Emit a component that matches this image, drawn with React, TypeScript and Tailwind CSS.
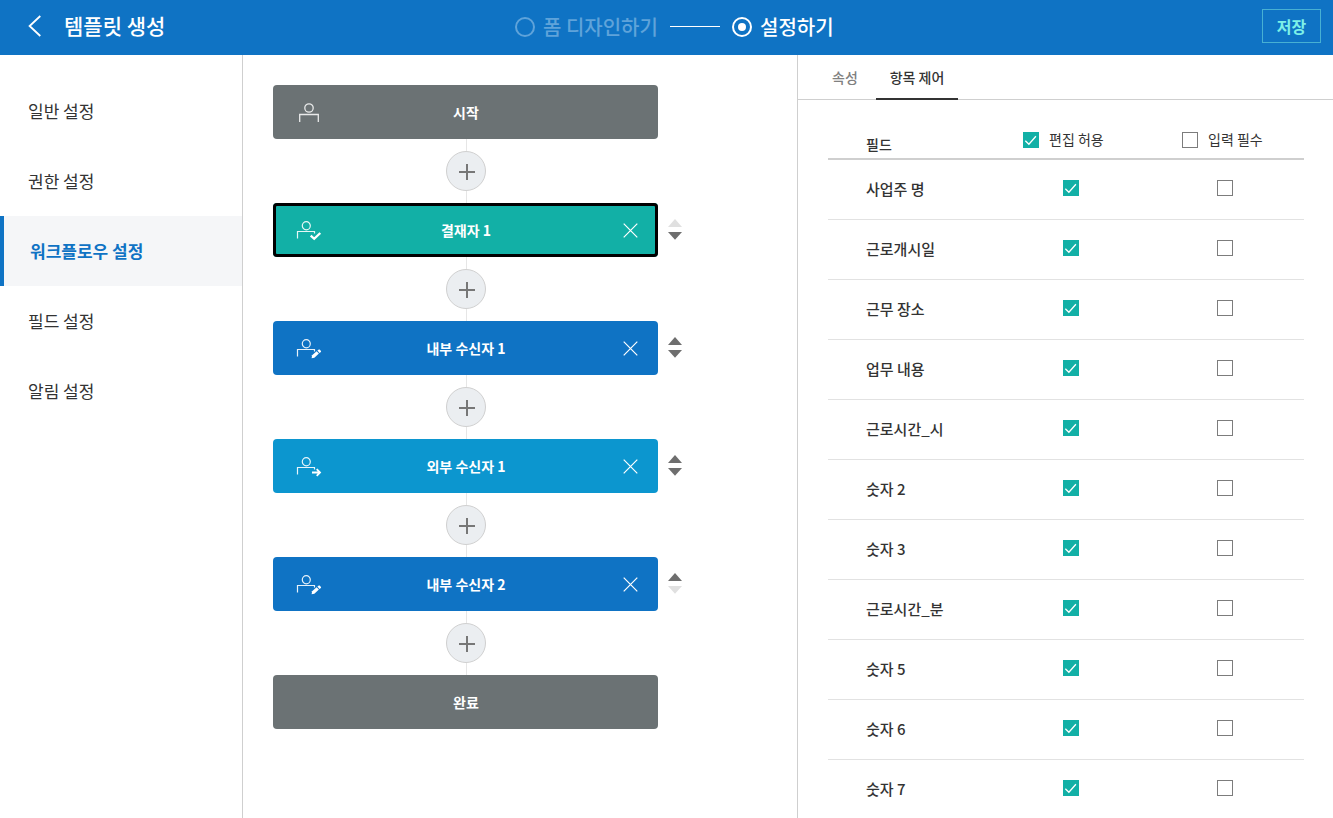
import React from "react";

type Kind = "start" | "check" | "edit" | "send" | "end";

interface FlowNode {
  kind: Kind;
  label: string;
  color: string;
  selected?: boolean;
  up?: boolean;
  down?: boolean;
}

const menu = ["일반 설정", "권한 설정", "워크플로우 설정", "필드 설정", "알림 설정"];
const activeMenu = 2;

const nodes: FlowNode[] = [
  { kind: "start", label: "시작", color: "bg-[#6b7274]" },
  { kind: "check", label: "결재자 1", color: "bg-[#12b0a6]", selected: true, up: false, down: true },
  { kind: "edit", label: "내부 수신자 1", color: "bg-[#0f73c4]", up: true, down: true },
  { kind: "send", label: "외부 수신자 1", color: "bg-[#0c96cf]", up: true, down: true },
  { kind: "edit", label: "내부 수신자 2", color: "bg-[#0f73c4]", up: true, down: false },
  { kind: "end", label: "완료", color: "bg-[#6b7274]" },
];

const fields = [
  "사업주 명", "근로개시일", "근무 장소", "업무 내용", "근로시간_시", "숫자 2",
  "숫자 3", "근로시간_분", "숫자 5", "숫자 6", "숫자 7",
];

function NodeIcon({ kind }: { kind: Kind }) {
  if (kind === "end") return null;
  if (kind === "start") {
    return (
      <svg width="28" height="24" viewBox="0 0 28 24" fill="none" stroke="#fff" strokeOpacity="0.85" strokeWidth="1.3">
        <circle cx="14" cy="8" r="4.2" />
        <path d="M4.7 22V14.5H23.3V22" />
      </svg>
    );
  }
  return (
    <svg width="28" height="24" viewBox="0 0 28 24" fill="none" stroke="#fff" strokeOpacity="0.9" strokeWidth="1.2">
      <ellipse cx="11.3" cy="7.8" rx="4" ry="4.1" />
      <path d="M2.5 20.5V13.5H19.5V15.5" />
      {kind === "check" && <path d="M15.7 17.6L19.2 20.8L25.3 15" strokeWidth="2.3" strokeOpacity="1" />}
      {kind === "edit" && (
        <g fill="#fff" stroke="none">
          <path d="M16.6 22.2L17.1 19.3L21.6 15.3L23.9 17.5L19.4 21.8Z" />
          <path d="M22.4 14.6L23.8 13.4Q24.3 13.2 24.8 13.7L26 15Q26.2 15.5 25.8 15.9L24.6 16.9Z" />
        </g>
      )}
      {kind === "send" && <path d="M17 18.5H25M21.7 15.2L25 18.5L21.7 21.8" strokeWidth="1.8" strokeOpacity="1" />}
    </svg>
  );
}

function Sorter({ up, down }: { up?: boolean; down?: boolean }) {
  return (
    <svg width="14" height="22" viewBox="0 0 14 22" className="mb-[2px] ml-[10px] shrink-0">
      <path d="M0 9L7 1L14 9Z" className={up ? "fill-[#6e6e6e]" : "fill-[#e0e0e0]"} />
      <path d="M0 14L7 21.8L14 14Z" className={down ? "fill-[#6e6e6e]" : "fill-[#e0e0e0]"} />
    </svg>
  );
}

function NodeRow({ node }: { node: FlowNode }) {
  const movable = node.up !== undefined;
  return (
    <div className="flex h-[54px] items-center">
      <div
        className={`grid h-[54px] w-[385px] shrink-0 grid-cols-[90px_1fr_90px] items-center rounded-[4px] ${node.color} ${
          node.selected ? "inset-ring-3 inset-ring-black" : ""
        }`}
      >
        <div className="flex pl-[22px]"><NodeIcon kind={node.kind} /></div>
        <span className="pl-px text-center text-[14px] leading-[20px] font-bold text-white">{node.label}</span>
        {movable && (
          <svg width="15" height="15" viewBox="0 0 15 15" stroke="#fff" strokeWidth="1.2" className="mt-px mr-[20px] justify-self-end">
            <path d="M0.7 0.7L14.3 14.3M14.3 0.7L0.7 14.3" />
          </svg>
        )}
      </div>
      {movable && <Sorter up={node.up} down={node.down} />}
    </div>
  );
}

function AddStep() {
  return (
    <div className="flex h-16 w-[387px] flex-col items-center">
      <div className="h-3 w-px bg-[#e6e6e6]" />
      <button className="mr-px flex h-10 w-10 items-center justify-center rounded-full border border-[#d0d0d0] bg-[#ebeef1]">
        <svg width="18" height="18" viewBox="0 0 18 18" stroke="#777" strokeWidth="2" className="mt-[2px] ml-[2px]">
          <path d="M9 1V17M1 9H17" />
        </svg>
      </button>
      <div className="h-3 w-px bg-[#e6e6e6]" />
    </div>
  );
}

function Box({ checked }: { checked?: boolean }) {
  return checked ? (
    <span className="flex h-4 w-4 shrink-0 bg-[#12b0a6]">
      <svg width="16" height="16" viewBox="0 0 16 16" fill="none" stroke="#fff" strokeWidth="1.3">
        <path d="M2.3 8.7L5.9 12.3L12.9 4.3" />
      </svg>
    </span>
  ) : (
    <span className="h-4 w-4 shrink-0 border border-[#7c7c7c] bg-white" />
  );
}

export default function App() {
  return (
    <div className="flex h-[818px] w-[1333px] flex-col overflow-hidden bg-white font-['Noto_Sans_CJK_KR',sans-serif] text-[#333]">
      <header className="flex h-[55px] shrink-0 items-center bg-[#0f73c4] text-white">
        <div className="flex w-[515px] items-center">
          <svg width="14" height="22" viewBox="0 0 14 22" fill="none" stroke="#fff" strokeWidth="1.8" className="mb-[3px] ml-[28px]">
            <path d="M12.3 1L1.6 11L12.3 21" />
          </svg>
          <h1 className="mb-[5px] ml-[22px] text-[21px] leading-[30px] font-medium">템플릿 생성</h1>
        </div>
        <div className="flex flex-1 items-center text-[20px] leading-[30px] font-medium">
          <span className="mb-px h-5 w-5 rounded-full border-2 border-[#5fa3da]" />
          <span className="mb-px ml-[8px] w-[116px] whitespace-nowrap text-[#5fa3da]">폼 디자인하기</span>
          <span className="mb-[2px] ml-[11px] h-px w-[50px] bg-white" />
          <span className="mb-px ml-[12px] flex h-5 w-5 items-center justify-center rounded-full border-2 border-white">
            <span className="h-[8px] w-[8px] rounded-full bg-white" />
          </span>
          <span className="mb-px ml-[8px]">설정하기</span>
        </div>
        <button className="mr-[12px] mb-[3px] h-[34px] w-[59px] border border-[#47b0d3] text-[16px] leading-[32px] font-bold text-[#7df0e8]">저장</button>
      </header>

      <div className="flex min-h-0 flex-1">
        <nav className="w-[243px] shrink-0 border-r border-[#cfcfcf] pt-[21px] text-[17px]">
          {menu.map((m, i) => (
            <div
              key={m}
              className={
                i === activeMenu
                  ? "flex h-[70px] items-center border-l-4 border-[#0f73c4] bg-[#f5f6f8] pl-[26px] font-bold text-[#0f73c4]"
                  : "flex h-[70px] items-center pl-[28px]"
              }
            >
              {m}
            </div>
          ))}
        </nav>

        <main className="w-[554px] shrink-0 pt-[30px] pl-[30px]">
          {nodes.map((n, i) => (
            <React.Fragment key={n.label}>
              <NodeRow node={n} />
              {i < nodes.length - 1 && <AddStep />}
            </React.Fragment>
          ))}
        </main>

        <aside className="flex flex-1 flex-col border-l border-[#cfcfcf]">
          <div className="flex h-[45px] shrink-0 border-b border-[#cfcfcf] text-[14px] leading-[44px] font-medium">
            <div className="w-[78px] pl-[34px] text-[#808080]">속성</div>
            <div className="h-[45px] w-[82px] border-b-2 border-[#333] text-center">항목 제어</div>
          </div>
          <div className="mt-[20px] mr-[29px] ml-[30px]">
            <div className="grid h-[40px] grid-cols-[195px_159px_1fr] border-b-2 border-[#cfcfcf] text-[14px] leading-[20px]">
              <span className="pt-[14px] pl-[38px] font-medium">필드</span>
              <div className="flex h-[40px] items-center gap-[10px]"><Box checked /><span className="mb-[2px]">편집 허용</span></div>
              <div className="flex h-[40px] items-center gap-[10px]"><Box /><span className="mb-[2px]">입력 필수</span></div>
            </div>
            {fields.map((f) => (
              <div key={f} className="grid h-[60px] grid-cols-[235px_154px_1fr] items-center border-b border-[#e2e2e2] pb-[3px] text-[15px] leading-[22px] font-medium">
                <span className="pt-px pl-[38px]">{f}</span>
                <Box checked />
                <Box />
              </div>
            ))}
          </div>
        </aside>
      </div>
    </div>
  );
}
